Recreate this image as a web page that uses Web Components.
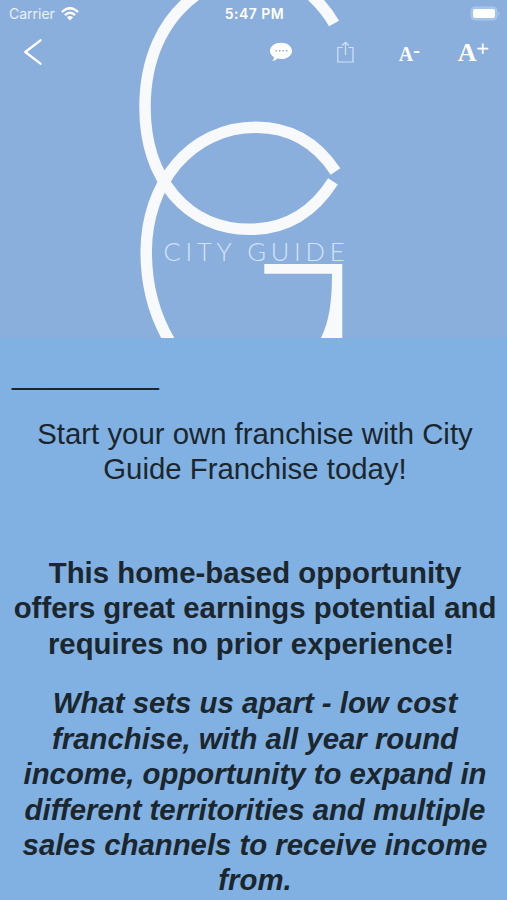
<!DOCTYPE html>
<html lang="en">
<head>
<meta charset="utf-8">
<title>City Guide</title>
<style>
  body {
    margin: 0;
    background: #81b0e2;
    font-family: "Liberation Sans", Arial, sans-serif;
  }
</style>
</head>
<body>
<franchise-page></franchise-page>

<script>
const define = (name, html) => {
  const template = document.createElement("template");
  template.innerHTML = html;
  customElements.define(name, class extends HTMLElement {
    constructor() {
      super();
      this.attachShadow({ mode: "open" });
      this.shadowRoot.appendChild(template.content.cloneNode(true));
    }
  });
};

define("city-logo", `
<style>
  :host { display: block; height: 338px; }
  svg { display: block; }
  .ring { fill: none; stroke: #f8f9fa; stroke-width: 11.5; }
  .hook { fill: #f8f9fa; }
  text {
    font: 300 25.5px Lato, sans-serif;
    fill: #d3e2f5;
  }
</style>
<svg width="507" height="338" viewBox="0 0 507 338">
  <path class="ring" d="M334 23.5Q326 9 311 -5M196 -5C162 20 145 60 145 107C145 179 187 229.3 250 229.3C287 229.3 314 211 333 181.3"/>
  <path class="ring" d="M335.5 171.5C316 142 290 127.3 256 127.3C190 127.3 146.2 184 146.2 252C146.2 285 154 315 170 342"/>
  <path class="hook" d="M264.3 264H342.3V338H321C329 322 332 302 332 273.7H264.3Z"/>
  <text x="163.5" y="261" textLength="181">CITY GUIDE</text>
</svg>
`);

define("status-bar", `
<style>
  :host {
    display: grid;
    grid-template-columns: 1fr auto 1fr;
    align-items: center;
    height: 27px;
    padding: 0 7px 0 9px;
    color: #fff;
    font: 14px Inter, sans-serif;
  }
  .carrier { display: flex; align-items: center; gap: 6px; color: #e9f1fb; }
  .time { font-weight: 600; font-size: 14px; letter-spacing: .45px; }
  .battery { justify-self: end; }
  svg { display: block; }
</style>
<div class="carrier">
  <span>Carrier</span>
  <svg width="18" height="14" viewBox="0 0 18 14" fill="none" stroke="#fff" stroke-width="2.3">
    <path d="M.9 5Q9-2.6 17.1 5M3.9 8.1Q9 3.4 14.1 8.1"/>
    <path d="M5.9 10.2Q9 7.6 12.1 10.2L9 13.4Z" fill="#fff" stroke="none"/>
  </svg>
</div>
<span class="time">5:47 PM</span>
<svg class="battery" width="31" height="16" viewBox="0 0 31 16">
  <rect x="2" y="1" width="26" height="13" rx="4" fill="#a3c2e8" stroke="#aac8eb"/>
  <rect x="4" y="3" width="22" height="9" rx="2" fill="#fff"/>
  <path d="M29.3 5.5Q31.500 7.5 29.3 9.8Z" fill="#b4cfee"/>
</svg>
`);

define("article-toolbar", `
<style>
  :host {
    display: flex;
    align-items: center;
    height: 50px;
    padding: 0 18px 0 23px;
    color: #fff;
    font-family: "Liberation Serif", serif;
    font-weight: 700;
  }
  svg { display: block; }
  .tools { display: flex; align-items: center; margin-left: auto; }
  .share { margin-left: 45px; }
  .smaller, .larger { display: flex; line-height: 28px; }
  .smaller { font-size: 20px; margin-left: 45px; padding-top: 4px; }
  .larger { font-size: 26px; margin-left: 38px; padding-top: 2px; }
  sup { line-height: 1; vertical-align: baseline; }
  .smaller sup { font-size: 20px; }
  .larger sup { font-size: 22px; font-weight: 400; margin-top: -1px; -webkit-text-stroke: .4px #fff; }
</style>
<svg width="20" height="28" viewBox="0 0 20 28" fill="none" stroke="#fff" stroke-width="2.3" stroke-linecap="round" stroke-linejoin="round">
  <path d="M17.5 2.3L2.3 14L17.5 25.7"/>
</svg>
<div class="tools">
  <svg width="22" height="20" viewBox="0 0 22 20">
    <path d="M11 .8C17 .8 22 4.3 22 8.9S17 17 11 17Q9 17 7.5 16.6Q5.4 18.8 2.3 19Q4 17.2 4 15.2C1.5 13.7 0 11.6 0 8.9C0 4.3 5 .8 11 .8Z" fill="#fff"/>
    <path d="M5.5 8.8h1.5m2 0h1.5m2 0h1.5m2 0h1.5" stroke="#8db0de" stroke-width="1.5"/>
  </svg>
  <svg class="share" width="17" height="22" viewBox="0 0 17 22" fill="none" stroke="#d2e2f5" stroke-width="1.2">
    <path d="M5.5 6.5H.8V21H16V6.5H11.5M8.5 14V1.2M5 4.5L8.500 1.2L12 4.5"/>
  </svg>
  <span class="smaller">A<sup>-</sup></span>
  <span class="larger">A<sup>+</sup></span>
</div>
`);

define("hero-banner", `
<style>
  :host { display: grid; height: 338px; overflow: hidden; background: #8bafdc; }
  ::slotted(*), .bars { grid-area: 1 / 1; }
  .bars { z-index: 1; }
</style>
<slot></slot>
<div class="bars">
  <status-bar></status-bar>
  <article-toolbar></article-toolbar>
</div>
`);

define("article-body", `
<style>
  :host {
    display: block;
    padding: 18px 0 0 3px;
    color: #1b262d;
    font-size: 29.35px;
    line-height: 35.4px;
    text-align: center;
    white-space: nowrap;
  }
  ::slotted(p) { margin: 0 0 24.5px; }
  ::slotted(.rule) { text-align: left; padding-left: 9px; }
  ::slotted(.intro) { margin-bottom: 68px; }
  ::slotted(.lead) { font-weight: 700; }
  ::slotted(.pitch) { font-weight: 700; font-style: italic; }
</style>
<slot></slot>
`);

define("franchise-page", `
<style>
  :host { display: block; height: 900px; overflow: hidden; background: #81b0e2; }
</style>
<hero-banner><city-logo></city-logo></hero-banner>
<article-body>
  <p class="rule">_________</p>
  <p class="intro">Start your own franchise with City<br>Guide Franchise today!</p>
  <p class="lead">This home-based opportunity<br>offers great earnings potential and<br>requires no prior experience!&nbsp;</p>
  <p class="pitch">What sets us apart - low cost<br>franchise, with all year round<br>income, opportunity to expand in<br>different territorities and multiple<br>sales channels to receive income<br>from.</p>
</article-body>
`);
</script>
</body>
</html>
